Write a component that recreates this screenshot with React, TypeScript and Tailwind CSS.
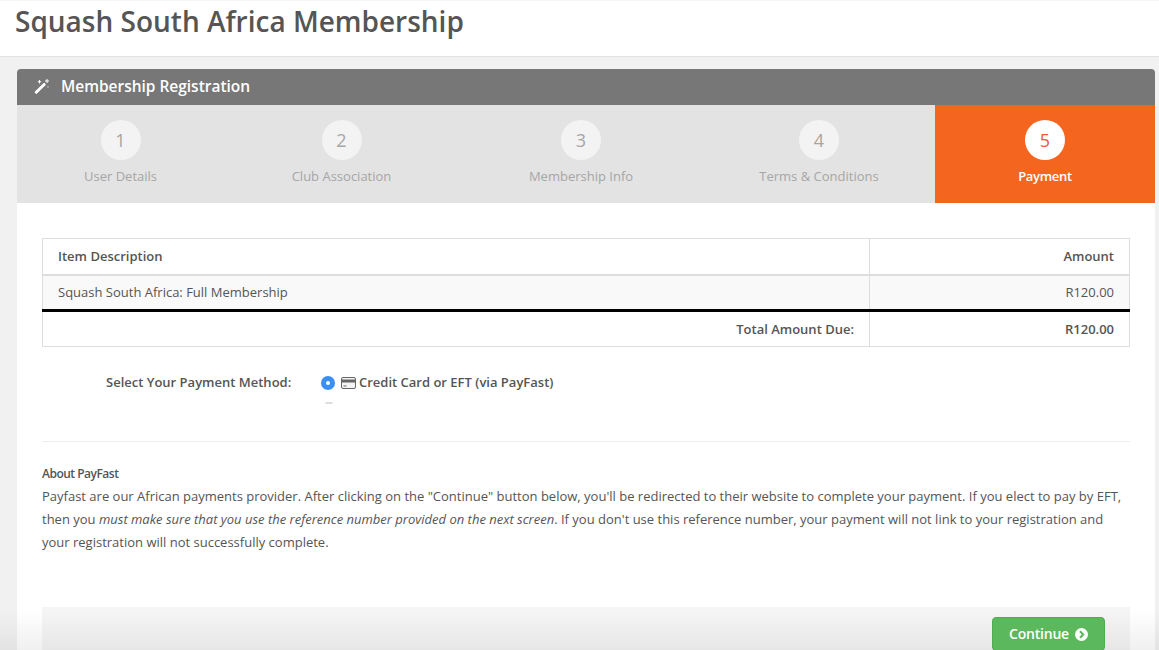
const steps = [
  { n: 1, label: "User Details" },
  { n: 2, label: "Club Association" },
  { n: 3, label: "Membership Info" },
  { n: 4, label: "Terms & Conditions" },
  { n: 5, label: "Payment", active: true },
];

export default function App() {
  return (
    <div className="relative h-[650px] overflow-hidden bg-[#f1f1f1] text-[13px] text-[#555] font-['Open_Sans',sans-serif]">
      {/* Page title */}
      <div className="h-[57px] border-t border-b border-t-[#f5f5f5] border-b-[#e2e2e2] bg-white pl-[15px]">
        <h1 className="text-[28px] leading-[40px] font-semibold text-[#555]">Squash South Africa Membership</h1>
      </div>

      <div className="mt-3 mr-1 ml-[17px]">
        {/* Panel heading */}
        <div className="flex h-9 items-center rounded-t-[4px] bg-[#777] pb-[1px] pl-[17px] text-white">
          <svg width="16" height="16" viewBox="0 0 16 16" fill="white">
            <path d="M1 12.600 9.400 4.200a1 1 0 0 1 1.400 0l.6.6a1 1 0 0 1 0 1.400L3 14.600a1 1 0 0 1-1.400 0l-.6-.6a1 1 0 0 1 0-1.400Z" />
            <path d="M5 1h1v1.200h1.200v1H6v1.300H5V3.200H3.800v-1H5ZM12.500 0h1v1.500H15v1h-1.500V4h-1V2.500H11v-1h1.500ZM13.500 7.500h1v1h-1Z" />
          </svg>
          <span className="ml-[11px] text-[15.500px] font-semibold tracking-[-0.02px]">Membership Registration</span>
        </div>

        {/* Wizard steps */}
        <div className="grid h-[98px] grid-cols-[207px_235px_244px_232px_220px] bg-[#e3e3e3]">
          {steps.map((s) => (
            <div
              key={s.n}
              className={`flex flex-col items-center pt-[15px] ${s.active ? "bg-[#f46620] text-white" : "text-[#a6a6a6]"}`}
            >
              <div
                className={`flex size-10 items-center justify-center rounded-full text-lg ${s.active ? "bg-white text-[#f5533d]" : "bg-[#f3f3f3] text-[#a6a6a6]"}`}
              >
                {s.n}
              </div>
              <div className={`mt-[6px] leading-[20px] ${s.active ? "font-semibold tracking-[-0.3px]" : ""}`}>{s.label}</div>
            </div>
          ))}
        </div>

        {/* Panel body */}
        <div className="bg-white px-[25px] pt-[35px]">
          <table className="w-full table-fixed border-collapse border border-[#ddd]">
            <tbody>
              <tr className="h-[36px] border-b-2 border-[#ddd] font-semibold">
                <td className="px-[15px]">Item Description</td>
                <td className="w-[260px] border-l border-[#ddd] px-[15px] text-right">Amount</td>
              </tr>
              <tr className="h-[36px] bg-[#f9f9f9]">
                <td className="px-[15px]">Squash South Africa: Full Membership</td>
                <td className="border-l border-[#ddd] px-[15px] text-right">R120.00</td>
              </tr>
              <tr className="h-[36px] border-t-[3px] border-black font-semibold">
                <td className="px-[15px] pt-[2px] text-right">Total Amount Due:</td>
                <td className="border-l border-[#ddd] px-[15px] pt-[2px] text-right">R120.00</td>
              </tr>
            </tbody>
          </table>

          {/* Payment method */}
          <div className="mt-[26px] flex h-[20px] items-center font-semibold">
            <div className="w-[279px] pl-16">Select Your Payment Method:</div>
            <span className="flex size-[14px] items-center justify-center rounded-full bg-[#3b8ff3]">
              <span className="size-1 rounded-full bg-white" />
            </span>
            <svg className="ml-[6px]" width="15" height="12" viewBox="0 0 15 12">
              <rect x="0.500" y="0.500" width="14" height="11" rx="1.500" fill="#f4f4f4" stroke="#666" />
              <rect x="1" y="2.500" width="13" height="3" fill="#666" />
              <rect x="2.500" y="8.500" width="3" height="1" fill="#666" />
            </svg>
            <span className="ml-[3px]">Credit Card or EFT (via PayFast)</span>
          </div>
          <div className="mt-[9px] ml-[283px] h-[2px] w-[8px] rounded-t-full bg-[#ddd]" />

          <div className="mt-[37px] border-t border-[#eee] pt-[21px]">
            <div className="text-xs leading-[22px] font-semibold tracking-[-0.5px]">About PayFast</div>
            <p className="leading-[23px]">
              Payfast are our African payments provider. After clicking on the "Continue" button below, you'll be
              redirected to their website to complete your payment. If you elect to pay by EFT, then you{" "}
              <em>must make sure that you use the reference number provided on the next screen</em>. If you don't use
              this reference number, your payment will not link to your registration and your registration will not
              successfully complete.
            </p>
          </div>

          {/* Form actions */}
          <div className="mt-[53px] flex h-[60px] justify-end bg-[#f5f5f5] pt-[10px] pr-[25px]">
            <button className="relative z-10 flex h-[34px] w-[113px] items-center justify-center gap-[6px] rounded-[4px] border border-[#4cae4c] bg-[#5cb85c] text-sm font-semibold tracking-[-0.2px] text-white">
              Continue
              <svg width="13" height="13" viewBox="0 0 13 13">
                <circle cx="6.500" cy="6.500" r="6.500" fill="white" />
                <path d="M5 3.200 8.200 6.500 5 9.800" fill="none" stroke="#5cb85c" strokeWidth="2" />
              </svg>
            </button>
          </div>
        </div>
      </div>

      {/* Shadow along the bottom edge */}
      <div className="pointer-events-none absolute inset-x-0 bottom-0 h-[40px] bg-gradient-to-b from-transparent to-black/[0.06]" />
    </div>
  );
}
